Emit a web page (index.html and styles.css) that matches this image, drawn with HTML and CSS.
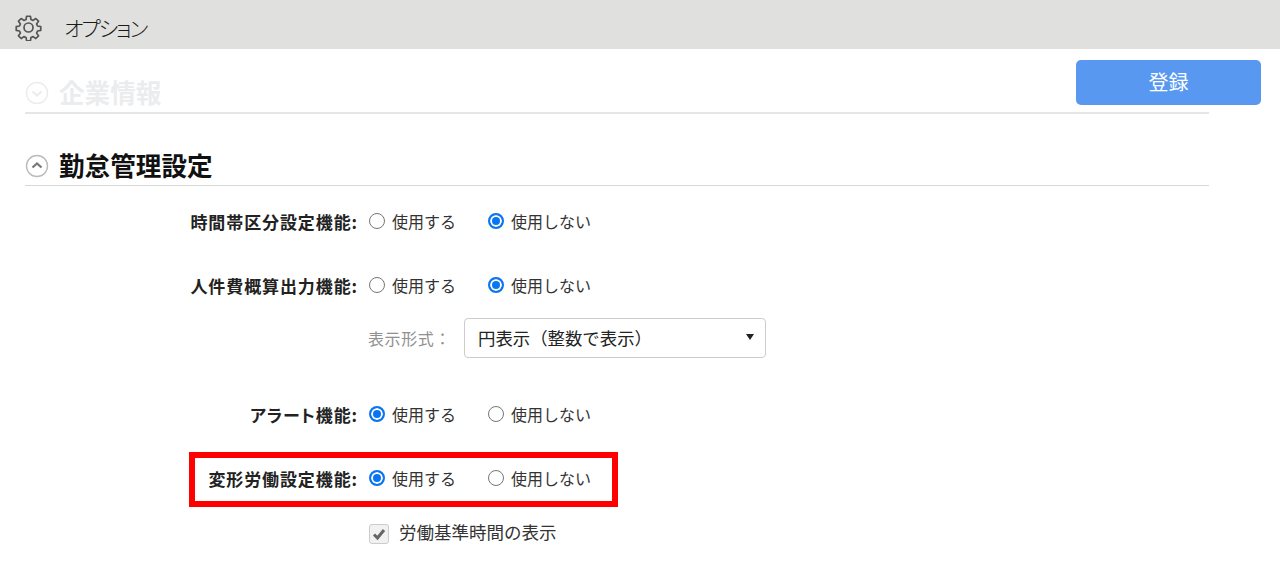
FILE: index.html
```html
<!DOCTYPE html>
<html lang="ja">
<head>
<meta charset="utf-8">
<title>オプション</title>
<link rel="stylesheet" href="styles.css">
</head>
<body>
<header class="topbar">
  <svg class="gear" viewBox="0 0 24 24" width="27" height="27" fill="none" stroke="#555" stroke-width="1.5" stroke-linejoin="round">
    <path d="M10.3 2h3.4l.5 2.9 1.9.8 2.4-1.7 2.4 2.4-1.7 2.4.8 1.9 2.9.5v3.4l-2.9.5-.8 1.9 1.7 2.4-2.4 2.4-2.4-1.7-1.9.8-.5 2.9h-3.4l-.5-2.9-1.9-.8-2.4 1.7-2.4-2.4 1.7-2.4-.8-1.9-2.9-.5v-3.4l2.9-.5.8-1.9-1.7-2.4 2.4-2.4 2.4 1.7 1.9-.8z"/>
    <circle cx="12" cy="12" r="4"/>
  </svg>
  <span class="topbar-title">オプション</span>
</header>
<main class="content">
  <button class="save" type="button">登録</button>
  <section class="section-head faded">
    <svg class="toggle" viewBox="0 0 24 24" width="24" height="24" fill="none" stroke="#ececec" stroke-width="1.4"><circle cx="12" cy="12" r="10.5"/><path d="M7.5 10.5 12 14.5l4.500-4" stroke-width="2.2"/></svg>
    <h2>企業情報</h2>
  </section>
  <section class="section-head open">
    <svg class="toggle" viewBox="0 0 24 24" width="24" height="24" fill="none" stroke="#bbb" stroke-width="1.4"><circle cx="12" cy="12" r="10.5"/><path d="M7.500 13.500 12 9.500l4.500 4" stroke="#777" stroke-width="2.2"/></svg>
    <h2>勤怠管理設定</h2>
  </section>
  <div class="row r1">
    <span class="label">時間帯区分設定機能:</span>
    <span class="opt one"><i class="radio"></i>使用する</span>
    <span class="opt"><i class="radio on"></i>使用しない</span>
  </div>
  <div class="row r2">
    <span class="label">人件費概算出力機能:</span>
    <span class="opt one"><i class="radio"></i>使用する</span>
    <span class="opt"><i class="radio on"></i>使用しない</span>
  </div>
  <div class="row-select">
    <span class="select-label">表示形式：</span>
    <div class="select"><span class="select-value">円表示（整数で表示）</span><i class="caret"></i></div>
  </div>
  <div class="row r3">
    <span class="label">アラート機能:</span>
    <span class="opt one"><i class="radio on"></i>使用する</span>
    <span class="opt"><i class="radio"></i>使用しない</span>
  </div>
  <div class="row r4">
    <span class="highlight"></span>
    <span class="label">変形労働設定機能:</span>
    <span class="opt one"><i class="radio on"></i>使用する</span>
    <span class="opt"><i class="radio"></i>使用しない</span>
  </div>
  <div class="row-check">
    <span class="check"><svg viewBox="0 0 20 20" width="20" height="20" fill="none" stroke="#666" stroke-width="3"><path d="M5 10.500 8.500 14 15 6"/></svg></span>
    <span class="check-text">労働基準時間の表示</span>
  </div>
</main>
</body>
</html>
```
FILE: styles.css
```css
* { box-sizing: border-box; }
html, body { margin: 0; height: 563px; overflow: hidden; background: #fff; }
body { font-family: "Noto Sans CJK JP", "Noto Sans", sans-serif; font-size: 16px; color: #222; }
.topbar { height: 49px; background: #e0e0de; display: flex; align-items: center; padding: 5px 0 0 15px; }
.gear { flex: none; }
.topbar-title { margin-left: 22px; font-size: 21px; font-feature-settings: "palt"; letter-spacing: -2px; color: #1a1a1a; font-weight: 300; line-height: 28px; }
.content { position: relative; padding: 27px 71px 0 25px; }
.save { position: absolute; left: 1076px; top: 11px; width: 185px; height: 45px; border: 0; border-radius: 5px; background: #5898f0; color: #fff; font: 400 20px "Noto Sans CJK JP", sans-serif; padding: 0 0 2px; }
.section-head { display: flex; align-items: center; gap: 10px; height: 37px; border-bottom: 1px solid #d8d8d8; padding-bottom: 2px; }
.section-head h2 { margin: 0; font-size: 25.6px; font-weight: 700; line-height: 34px; color: #111; position: relative; top: -1px; }
.section-head.faded { border-bottom: 2px solid #e6e6e6; height: 38px; }
.section-head.faded h2 { color: #ebecee; }
.section-head.open { margin-top: 35px; }
.toggle { flex: none; }
.row { display: flex; align-items: center; height: 24px; padding-bottom: 2px; position: relative; }
.label { width: 333px; text-align: right; font-weight: 700; font-size: 17px; font-feature-settings: "palt"; letter-spacing: .9px; color: #222; flex: none; white-space: nowrap; }
.opt { display: flex; align-items: center; color: #333; font-size: 16px; }
.one { width: 119px; margin-left: 11px; }
.radio { width: 16px; height: 16px; border: 1px solid #767676; border-radius: 50%; margin: 0 7px 0 0; flex: none; background: #fff; }
.radio.on { border: 2px solid #0a75f0; background: #0a75f0; box-shadow: inset 0 0 0 2px #fff; }
.r1 { margin-top: 24px; }
.r2 { margin-top: 40px; }
.r3 { margin-top: 45px; }
.r4 { margin-top: 40px; }
.row-select { display: flex; align-items: center; margin-top: 20px; padding-left: 343px; height: 40px; }
.select-label { width: 96px; color: #909090; font-size: 16px; letter-spacing: .6px; white-space: nowrap; flex: none; }
.select { width: 302px; height: 40px; border: 1px solid #ccc; border-radius: 4px; display: flex; align-items: center; justify-content: space-between; padding: 0 11px 2px 13px; color: #222; font-size: 17.4px; }
.select-value { text-spacing-trim: space-all; }
.caret { width: 0; height: 0; border: 4.500px solid transparent; border-top: 6px solid #222; border-bottom: 0; }
.highlight { position: absolute; left: 164px; top: -15px; width: 429px; height: 55px; border: 6px solid #f00; }
.row-check { display: flex; align-items: center; gap: 10px; margin-top: 30px; padding-left: 344px; font-size: 17.5px; color: #333; height: 24px; }
.check-text { position: relative; top: -2px; }
.check { width: 20px; height: 20px; border: 1px solid #ccc; border-radius: 3px; background: #f1f1f1; display: flex; flex: none; margin-top: 2px; }
.check svg { margin: -1px; flex: none; }
```
